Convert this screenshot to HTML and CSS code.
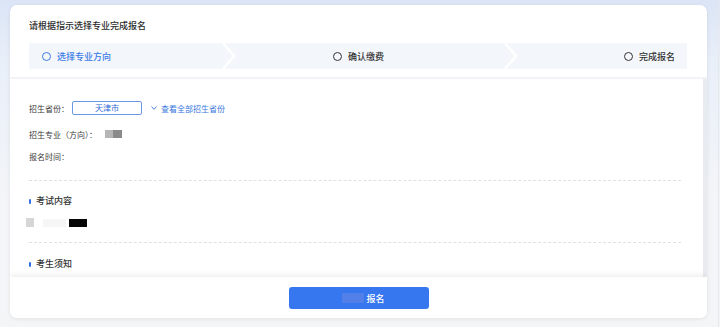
FILE: index.html
```html
<!DOCTYPE html>
<html lang="zh">
  <head>
    <meta charset="UTF-8" />
    <meta name="viewport" content="width=device-width, initial-scale=1.0" />
    <title>选择专业完成报名</title>
    <link rel="stylesheet" href="styles.css">
  </head>
  <body>
    <div class="card">
      <div class="head">
        <h2>请根据指示选择专业完成报名</h2>
        <div class="steps">
          <div class="step active"><i class="dot"></i>选择专业方向</div>
          <div class="step"><i class="dot"></i>确认缴费</div>
          <div class="step"><i class="dot"></i>完成报名</div>
          <svg class="arrow first" width="14" height="26" viewBox="0 0 14 26">
            <polyline points="1,0 12,13 1,26" fill="none" stroke="#fff" stroke-width="2.5" />
          </svg>
          <svg class="arrow second" width="14" height="26" viewBox="0 0 14 26">
            <polyline points="1,0 12,13 1,26" fill="none" stroke="#fff" stroke-width="2.5" />
          </svg>
        </div>
      </div>

      <div class="body">
        <div class="row row-province">
          <span class="label">招生省份：</span>
          <span class="select">天津市</span>
          <span class="more">
            <svg width="6" height="4" viewBox="0 0 6 4"><polyline points="0.5,0.5 3,3.3 5.5,0.5" fill="none" stroke="#3a78e0" stroke-width="0.9" /></svg>
            查看全部招生省份
          </span>
        </div>
        <div class="row row-major">
          <span class="label">招生专业（方向）：</span>
          <span class="mask light"></span><span class="mask dark"></span>
        </div>
        <div class="row row-time">
          <span class="label">报名时间：</span>
        </div>
        <div class="divider"></div>

        <h3 class="sec">考试内容</h3>
        <div class="exam">
          <span class="blk gray"></span>
          <span class="blk faint"></span>
          <span class="blk black"></span>
        </div>
        <div class="divider second"></div>

        <h3 class="sec notice">考生须知</h3>
      </div>

      <div class="foot">
        <button class="submit"><span class="blur"></span>报名</button>
      </div>
    </div>
    <div class="edge"></div>
  </body>
</html>
```

FILE: styles.css
```css
* {
  margin: 0;
  padding: 0;
  box-sizing: border-box;
}
body {
  font-family: "Noto Sans CJK SC", "Noto Sans", sans-serif;
  width: 720px;
  height: 327px;
  overflow: hidden;
  background: linear-gradient(to bottom, #dbe5f6 0px, #e9eff9 60px, #f3f5f8 200px, #f4f5f7 100%);
  padding: 5px 0 0 10px;
  color: #333;
  display: flex;
  align-items: flex-start;
}
.card {
  width: 697px;
  height: 313px;
  background: #fff;
  border-radius: 7px;
  box-shadow: 0 1px 4px rgba(0, 0, 0, 0.08);
  display: flex;
  flex-direction: column;
  overflow: hidden;
}
.edge {
  margin-left: 11px;
  margin-top: -5px;
  width: 1px;
  height: 327px;
  background: #e6e8ec;
}

/* header */
.head {
  padding: 15px 20px 8px 19px;
  border-bottom: 2px solid #f1f3f6;
}
.head h2 {
  font-size: 9px;
  line-height: 12px;
  font-weight: 500;
  color: #2b2b2b;
}
.steps {
  position: relative;
  margin-top: 11px;
  height: 26px;
  background: #f3f6fb;
  display: flex;
  justify-content: space-between;
  align-items: center;
  padding: 0 12px 0 13px;
}
.step {
  flex: 1;
  display: flex;
  align-items: center;
  column-gap: 6px;
  font-size: 9px;
  font-weight: 500;
  color: #333;
}
.step:nth-child(2) {
  justify-content: center;
}
.step:nth-child(3) {
  justify-content: flex-end;
}
.step.active {
  color: #3a7be6;
}
.dot {
  width: 9px;
  height: 9px;
  border-radius: 50%;
  border: 1.5px solid #333;
}
.step.active .dot {
  border-color: #3a7be6;
}
.arrow {
  position: absolute;
  top: 0;
}
.arrow.first {
  left: 193px;
}
.arrow.second {
  left: 475px;
}

/* body */
.body {
  flex: 1;
  padding: 22px 22px 0 19px;
  border-right: 4px solid #e8ebf0;
  overflow: hidden;
}
.row {
  display: flex;
  align-items: center;
  font-size: 8px;
  color: #3d3d3d;
  height: 12px;
}
.row-province {
  height: 14px;
}
.row-major {
  margin-top: 13px;
}
.row-time {
  margin-top: 10px;
}
.label {
  white-space: nowrap;
}
.select {
  margin-left: 3px;
  width: 70px;
  height: 14px;
  border: 1px solid #6a98e2;
  border-radius: 2px;
  color: #2f6bd6;
  text-align: center;
  line-height: 12px;
}
.more {
  margin-left: 9px;
  color: #3a78e0;
  display: flex;
  align-items: center;
  column-gap: 4px;
}
.mask {
  width: 8px;
  height: 8px;
}
.mask.light {
  margin-left: 8px;
  background: #b5b5b5;
}
.mask.dark {
  background: #8a8a8a;
  width: 9px;
}
.divider {
  margin-top: 18px;
  border-top: 1px dashed #e0e0e0;
}
.divider.second {
  margin-top: 15px;
}
.sec {
  margin-top: 14px;
  font-size: 9px;
  line-height: 12px;
  font-weight: 500;
  color: #333;
  display: flex;
  align-items: center;
  column-gap: 5px;
}
.sec::before {
  content: "";
  width: 2px;
  height: 5px;
  border-radius: 1px;
  background: #2f6fe3;
}
.sec.notice {
  margin-top: 15px;
}
.exam {
  margin-top: 11px;
  margin-left: -3px;
  display: flex;
  align-items: center;
  height: 9px;
}
.blk {
  height: 8px;
}
.blk.gray {
  width: 8px;
  height: 9px;
  background: #d6d6d6;
}
.blk.faint {
  margin-left: 9px;
  width: 23px;
  background: #f6f6f6;
}
.blk.black {
  margin-left: 3px;
  width: 18px;
  background: #050505;
}

/* footer */
.foot {
  height: 41px;
  background: #fff;
  box-shadow: 0 -2px 6px rgba(0, 0, 0, 0.07);
  display: flex;
  justify-content: center;
  padding-top: 10px;
  position: relative;
}
.submit {
  width: 140px;
  height: 22px;
  border: none;
  border-radius: 3px;
  background: #3677ef;
  color: #fff;
  font-family: inherit;
  font-size: 9px;
  font-weight: 500;
  display: flex;
  align-items: center;
  justify-content: center;
  padding-left: 10px;
}
.blur {
  width: 22px;
  height: 10px;
  margin-right: 2px;
  background: rgba(120, 140, 225, 0.45);
}
```
